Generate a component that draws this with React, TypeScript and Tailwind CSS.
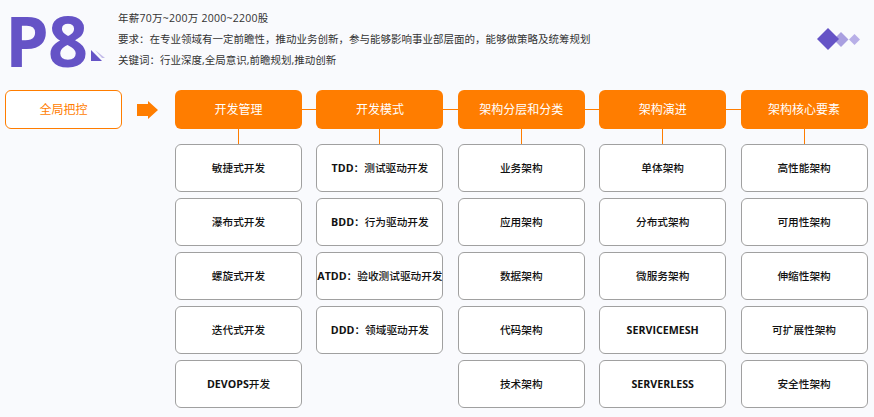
const columns = [
  { title: "开发管理", items: ["敏捷式开发", "瀑布式开发", "螺旋式开发", "迭代式开发", "DEVOPS开发"] },
  { title: "开发模式", items: ["TDD：测试驱动开发", "BDD：行为驱动开发", "ATDD：验收测试驱动开发", "DDD：领域驱动开发"] },
  { title: "架构分层和分类", items: ["业务架构", "应用架构", "数据架构", "代码架构", "技术架构"] },
  { title: "架构演进", items: ["单体架构", "分布式架构", "微服务架构", "SERVICEMESH", "SERVERLESS"] },
  { title: "架构核心要素", items: ["高性能架构", "可用性架构", "伸缩性架构", "可扩展性架构", "安全性架构"] },
];

const font = { fontFamily: '"Open Sans", "Noto Sans CJK SC", sans-serif' };

// latin runs sit heavier than the chinese ones in the cells
function CellLabel({ text }: { text: string }) {
  const parts = text.split(/([A-Z]+)/).filter(Boolean);
  return (
    <span className="font-medium">
      {parts.map((part, i) =>
        /^[A-Z]+$/.test(part) ? (
          <span key={i} className="font-bold">{part}</span>
        ) : (
          <span key={i}>{part}</span>
        ),
      )}
    </span>
  );
}

export default function App() {
  return (
    <main
      className="w-[874px] h-[417px] overflow-hidden bg-[#f9fafd] text-[#333333]"
      style={font}
    >
      {/* Header */}
      <section className="flex h-[90px]">
        <div className="relative w-[118px] shrink-0">
          <div className="-mt-[8px] pl-[5px] text-[70px] leading-[96px] font-bold tracking-[-1px] text-[#6553c6]">P8</div>
          <svg className="absolute left-[90px] top-[49px]" width="16" height="12" viewBox="0 0 16 12">
            <path d="M1 1 L1 12 L12 12 Z" fill="#6553c6" />
            <path d="M5 1 L15 9 L12 9 Z" fill="#c3bbe9" />
          </svg>
        </div>
        <div className="flex flex-col pt-[8px] text-[10.5px] leading-[21px]">
          <p className="tracking-[0.25px]">年薪70万~200万 2000~2200股</p>
          <p>要求：在专业领域有一定前瞻性，推动业务创新，参与能够影响事业部层面的，能够做策略及统筹规划</p>
          <p>关键词：行业深度,全局意识,前瞻规划,推动创新</p>
        </div>
        <div className="ml-auto mr-[12px] mt-[27px]">
          <svg width="46" height="24" viewBox="0 0 46 24">
            <path d="M25 5 L32.5 12.5 L25 20 L17.5 12.5 Z" fill="#a99fe0" />
            <path d="M12 1 L23 12 L12 23 L1 12 Z" fill="#6553c6" />
            <path d="M38.5 7 L44 12.5 L38.5 18 L33 12.5 Z" fill="#b8afe7" />
          </svg>
        </div>
      </section>

      {/* Body */}
      <section className="flex">
        <div className="ml-[5px] w-[117px] h-[39px] shrink-0 rounded-[6px] border border-[#ff7d00] bg-white flex items-center justify-center text-[12px] text-[#ff7d00]">
          全局把控
        </div>
        <div className="w-[53px] h-[39px] shrink-0 flex items-center pl-[15px]">
          <svg width="22" height="18" viewBox="0 0 22 18">
            <path d="M0 3 H11 V0 L21 9 L11 18 V15 H0 Z" fill="#ff7d00" />
          </svg>
        </div>
        <div className="grid grid-cols-[127px_127px_127px_127px_127px] gap-x-[14.4px]">
          {columns.map((col, i) => (
            <div key={col.title} className="flex flex-col items-center">
              <div className="relative w-full h-[39px] rounded-[6px] bg-[#ff7d00] flex items-center justify-center text-[12px] text-white">
                {col.title}
                {i < columns.length - 1 && (
                  <span className="absolute left-full top-[19px] w-[15px] h-px bg-[#ff7d00]" />
                )}
              </div>
              <div className="w-px h-[15px] bg-[#ff7d00]" />
              <div className="w-full flex flex-col gap-[6px]">
                {col.items.map((item) => (
                  <div
                    key={item}
                    className="w-full h-[48px] rounded-[6px] border border-[#a0a0a0] bg-white flex items-center justify-center whitespace-nowrap text-[10.67px] text-[#111111]"
                  >
                    <CellLabel text={item} />
                  </div>
                ))}
              </div>
            </div>
          ))}
        </div>
      </section>
    </main>
  );
}
